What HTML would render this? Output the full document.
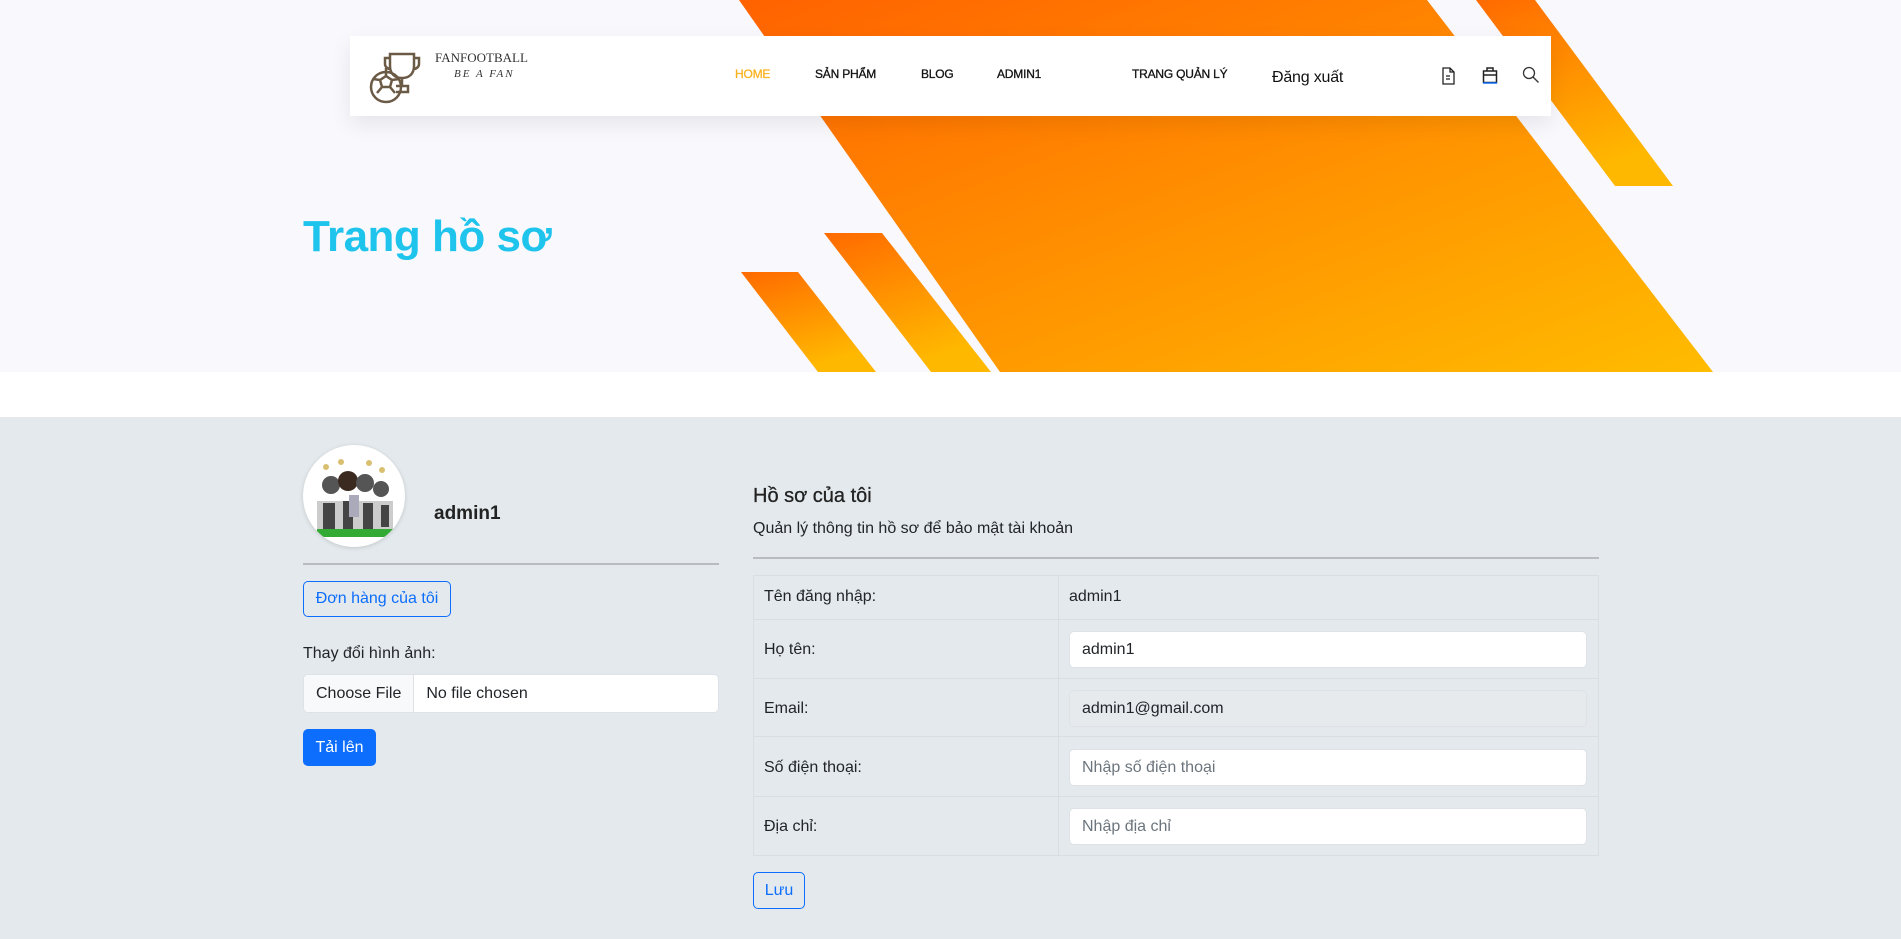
<!DOCTYPE html>
<html><head><meta charset="utf-8"><style>
*{box-sizing:border-box;margin:0;padding:0}
body{width:1901px;height:939px;overflow:hidden;font-family:"Liberation Sans","DejaVu Sans",sans-serif;color:#212529;background:#e3e9ec;position:relative}
.hero{position:absolute;left:0;top:0;width:1901px;height:372px;background:#f8f8fd;overflow:hidden}
.white{position:absolute;left:0;top:372px;width:1901px;height:45px;background:#fff}
.nav{position:absolute;left:350px;top:36px;width:1201px;height:80px;background:#fff;box-shadow:0 8px 20px rgba(0,0,0,.08)}
.nav a{position:absolute;top:31px;font-size:12px;color:#111;letter-spacing:-.2px;-webkit-text-stroke:.3px #111}
.abs{position:absolute}
h1{position:absolute;left:303px;top:212px;font-size:44px;color:#1ec4ec;font-weight:bold;letter-spacing:-.5px}
.btn-o{position:absolute;border:1px solid #0d6efd;color:#0d6efd;border-radius:5px;font-size:16px;display:flex;align-items:center;justify-content:center;background:transparent}
.inp{position:absolute;background:#fff;border:1px solid #dee2e6;border-radius:5px;font-size:16px;padding-left:12px;display:flex;align-items:center}
.row{position:absolute;left:753px;width:846px;border-bottom:1px solid #d8dee2;font-size:16px}
</style></head><body>
<div class="hero">
<svg width="1901" height="372" style="position:absolute;left:0;top:0">
<defs><linearGradient id="g" x1="0" y1="0" x2="1" y2="1"><stop offset="0" stop-color="#ff6200"/><stop offset="1" stop-color="#ffbc00"/></linearGradient>
<linearGradient id="g2" x1="0" y1="0" x2="0.4" y2="1"><stop offset="0" stop-color="#ff6a00"/><stop offset="1" stop-color="#ffb800"/></linearGradient></defs>
<polygon points="739,0 1427,0 1713,372 1000,372" fill="url(#g)"/>
<polygon points="1476,0 1535,0 1673,186 1615,186" fill="url(#g2)"/>
<polygon points="824,233 882,233 991,372 931,372" fill="url(#g2)"/>
<polygon points="741,272 798,272 876,372 818,372" fill="url(#g2)"/>
</svg>
<h1>Trang hồ sơ</h1>
</div>
<div class="white"></div>
<div class="nav">
<svg class="abs" style="left:18px;top:14px" width="60" height="56" viewBox="0 0 60 56" fill="none" stroke="#6b5a45" stroke-width="2.5">
<circle cx="18" cy="37" r="15"/><path d="M12 30l6-4 6 4-2 7h-8zM18 26v-8M24 30l7-1M12 30l-7-1M14 37l-5 6M22 37l5 6"/>
<path d="M22 4h24v12c0 8-5 12-12 12s-12-4-12-12zM22 8h-5v6c0 3 3 5 5 5M46 8h5v6c0 3-3 5-5 5M34 28v8M28 42h12v-6H28"/>
</svg>
<div class="abs" style="left:85px;top:14px;font-family:'Liberation Serif',serif;font-size:13px;color:#333">FANFOOTBALL</div>
<div class="abs" style="left:104px;top:32px;font-family:'Liberation Serif',serif;font-style:italic;font-size:11px;color:#333;letter-spacing:2px">BE A FAN</div>
<a style="left:385px;color:#f9b320;-webkit-text-stroke:.3px #f9b320">HOME</a>
<a style="left:465px">SẢN PHẨM</a>
<a style="left:571px">BLOG</a>
<a style="left:647px">ADMIN1</a>
<a style="left:782px">TRANG QUẢN LÝ</a>
<a style="left:922px;top:33px;font-size:16px;-webkit-text-stroke:0">Đăng xuất</a>
<svg class="abs" style="left:1091px;top:31px" width="14" height="18" viewBox="0 0 14 18" fill="none" stroke="#222" stroke-width="1.3"><path d="M2 1h7l4 4v12H2zM9 1v4h4M5 9h4M5 12h4"/></svg>
<svg class="abs" style="left:1132px;top:30px" width="16" height="18" viewBox="0 0 16 18" fill="none" stroke="#222" stroke-width="1.5"><path d="M5 5V2h6v3M1.5 5h13v11.5h-13zM1.5 9h13"/><path d="M1 17h14" stroke="#0d6efd"/></svg>
<svg class="abs" style="left:1172px;top:30px" width="18" height="18" viewBox="0 0 18 18" fill="none" stroke="#333" stroke-width="1.3"><circle cx="7" cy="7" r="5.5"/><path d="M11 11l5.5 5.5"/></svg>
</div>

<div class="abs" style="left:303px;top:445px;width:102px;height:102px;border-radius:50%;background:#fff;box-shadow:0 1px 4px rgba(0,0,0,.15);overflow:hidden">
<svg width="102" height="102" viewBox="0 0 102 102"><g fill="#555"><circle cx="28" cy="40" r="9"/><circle cx="45" cy="36" r="10" fill="#3a2a20"/><circle cx="62" cy="38" r="9"/><circle cx="78" cy="44" r="8"/></g>
<path d="M14 56h76v28H14z" fill="#ccc"/><path d="M20 58h12v26H20zM40 56h10v30H40zM60 58h10v28H60zM78 60h8v22h-8z" fill="#444"/><rect x="46" y="50" width="10" height="22" fill="#aab"/><rect x="14" y="84" width="76" height="8" fill="#3a3"/>
<g fill="#d9c070"><circle cx="23" cy="22" r="3"/><circle cx="38" cy="17" r="3"/><circle cx="66" cy="18" r="3"/><circle cx="79" cy="25" r="3"/></g></svg>
</div>
<div class="abs" style="left:434px;top:503px;font-size:19px;font-weight:bold;color:#222">admin1</div>
<div class="abs" style="left:303px;top:563px;width:416px;height:2px;background:#b8bcbf"></div>
<div class="btn-o" style="left:303px;top:581px;width:148px;height:36px">Đơn hàng của tôi</div>
<div class="abs" style="left:303px;top:645px;font-size:16px">Thay đổi hình ảnh:</div>
<div class="inp" style="left:303px;top:674px;width:416px;height:39px;padding:0;overflow:hidden"><span style="background:#f8f9fa;height:100%;padding:0 12px;display:flex;align-items:center;border-right:1px solid #dee2e6">Choose File</span><span style="padding-left:12px">No file chosen</span></div>
<div class="abs" style="left:303px;top:729px;width:73px;height:37px;background:#0d6efd;border-radius:5px;color:#fff;font-size:16px;display:flex;align-items:center;justify-content:center">Tải lên</div>

<div class="abs" style="left:753px;top:485px;font-size:20px;color:#222;-webkit-text-stroke:.3px #222">Hồ sơ của tôi</div>
<div class="abs" style="left:753px;top:520px;font-size:16px">Quản lý thông tin hồ sơ để bảo mật tài khoản</div>
<div class="abs" style="left:753px;top:557px;width:846px;height:2px;background:#b8bcbf"></div>
<div class="abs" style="left:753px;top:575px;width:846px;height:281px;border:1px solid #d8dee2"></div>
<div class="abs" style="left:1058px;top:575px;width:1px;height:281px;background:#d8dee2"></div>
<div class="row" style="top:575px;height:45px"></div>
<div class="row" style="top:620px;height:59px"></div>
<div class="row" style="top:679px;height:58px"></div>
<div class="row" style="top:737px;height:60px"></div>
<div class="abs" style="left:764px;top:588px">Tên đăng nhập:</div><div class="abs" style="left:1069px;top:588px">admin1</div>
<div class="abs" style="left:764px;top:641px">Họ tên:</div><div class="inp" style="left:1069px;top:631px;width:518px;height:37px">admin1</div>
<div class="abs" style="left:764px;top:700px">Email:</div><div class="inp" style="left:1069px;top:690px;width:518px;height:37px;background:#e6eaed">admin1@gmail.com</div>
<div class="abs" style="left:764px;top:759px">Số điện thoại:</div><div class="inp" style="left:1069px;top:749px;width:518px;height:37px;color:#6c757d">Nhập số điện thoại</div>
<div class="abs" style="left:764px;top:818px">Địa chỉ:</div><div class="inp" style="left:1069px;top:808px;width:518px;height:37px;color:#6c757d">Nhập địa chỉ</div>
<div class="btn-o" style="left:753px;top:872px;width:52px;height:37px">Lưu</div>
</body></html>
